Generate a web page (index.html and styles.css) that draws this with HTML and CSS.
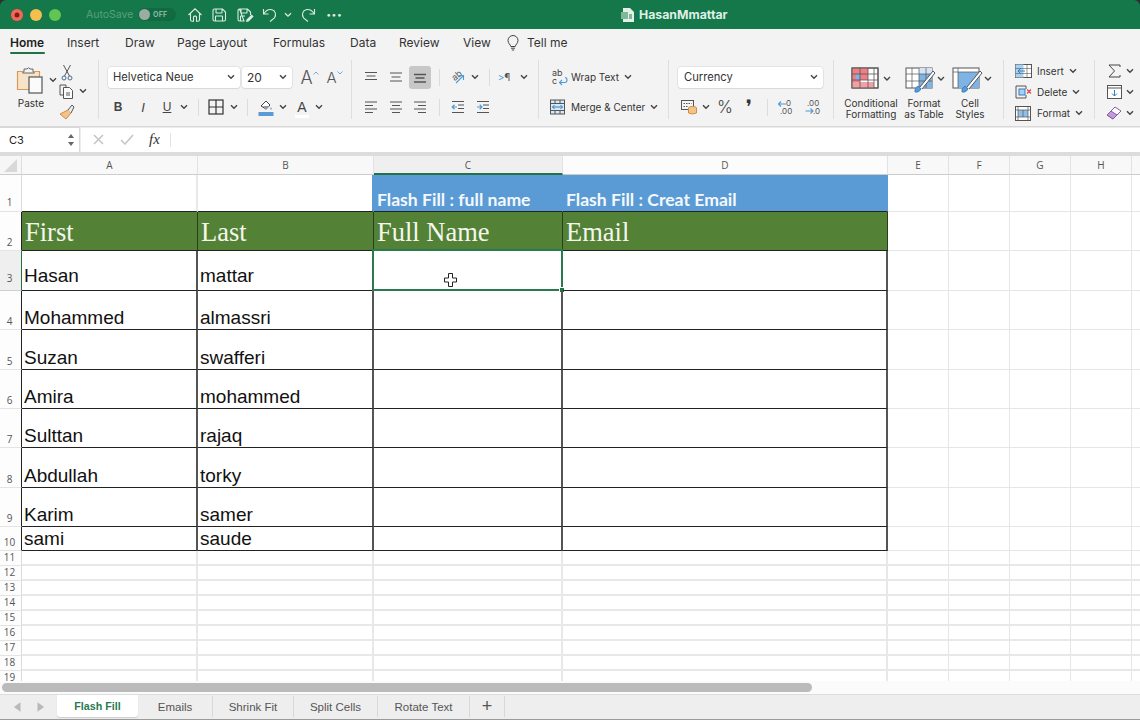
FILE: index.html
```html
<!DOCTYPE html>
<html lang="en">
<head>
<meta charset="utf-8">
<title>HasanMmattar</title>
<link rel="stylesheet" href="styles.css">
</head>
<body>
<svg class="defs" width="0" height="0"><symbol id="chev" viewBox="0 0 8 6"><path d="M1 1.200l3 3 3-3" fill="none" stroke="#444" stroke-width="1.400"/></symbol><symbol id="caret-up" viewBox="0 0 6 4"><path d="M.5 3.500L3 1l2.500 2.500" fill="none" stroke="#7fa9cc" stroke-width="1"/></symbol><symbol id="caret-dn" viewBox="0 0 6 4"><path d="M.5 .5L3 3 5.500 .5" fill="none" stroke="#7fa9cc" stroke-width="1"/></symbol></svg>
<div class="app">
<header class="titlebar">
  <span class="light red"></span><span class="light yellow"></span><span class="light green"></span>
  <span class="autosave">AutoSave</span>
  <span class="toggle"><span class="knob"></span><span class="off">OFF</span></span>
  <span class="i w7"></span>
  <span class="i w24"><svg width="16" height="16" viewBox="0 0 16 16" class="tb"><path d="M1.500 8L8 1.800 14.500 8M3.500 6.500v6.200q0 1.600 1.600 1.600h1.400v-4.200q0-1 1-1h1q1 0 1 1v4.200h1.400q1.600 0 1.600-1.600V6.500"/></svg></span>
  <span class="i w24"><svg width="16" height="16" viewBox="0 0 16 16" class="tb"><path d="M3.500 2h8l3 3v7.500q0 1.500-1.500 1.500H3.500Q2 14 2 12.500v-9Q2 2 3.500 2zM5 2v3.500q0 .5.500.5h5q.5 0 .5-.5V2M4.500 14V9.500q0-.5.500-.5h6q.5 0 .5.500V14"/></svg></span>
  <span class="i w28"><svg width="18" height="16" viewBox="0 0 18 16" class="tb"><path d="M3.500 2h8l3 3v3M8 14H3.500Q2 14 2 12.500v-9Q2 2 3.500 2zM5 2v3.500q0 .5.500.5h5q.5 0 .5-.5V2M4.500 14V9.500q0-.5.500-.5h4"/><path d="M10 15l.6-2.600 5-5 2 2-5 5z" fill="#dcebe3" stroke="none"/></svg></span>
  <span class="i w22"><svg width="16" height="16" viewBox="0 0 16 16" class="tb"><path d="M1.500 2v5h5M1.800 6.800C4 3.500 7 2 10 2.800c3.500 1 4.500 5 2.500 8L8 14.500"/></svg></span>
  <span class="i w14"><svg width="8" height="6" class="wchev"><path d="M1 1.200l3 3 3-3"/></svg></span>
  <span class="i w26"><svg width="16" height="16" viewBox="0 0 16 16" class="tb"><path d="M14.500 2v5h-5M14.200 6.800C12 3.500 9 2 6 2.800c-3.500 1-4.500 5-2.500 8L8 14.500"/></svg></span>
  <span class="i w26 dots">···</span>
  <span class="doc"><svg width="14" height="16" viewBox="0 0 14 16"><path d="M2 1h7l4 4v10H2z" fill="#e4efe9"/><rect x="0" y="5" width="7" height="7" fill="#7fb79b"/><rect x="8" y="7" width="3" height="5" fill="#7fb79b"/></svg></span>
  <span class="doctitle">HasanMmattar</span>
</header>

<nav class="tabs">
  <span class="tab active">Home</span><span class="tab t-insert">Insert</span><span class="tab t-draw">Draw</span><span class="tab t-page">Page Layout</span><span class="tab t-form">Formulas</span><span class="tab t-data">Data</span><span class="tab t-rev">Review</span><span class="tab t-view">View</span>
  <svg class="bulb" width="12" height="16" viewBox="0 0 12 16"><path d="M3.800 11.500C3.500 9.500 1 8.500 1 5.500a5 5 0 0 1 10 0c0 3-2.500 4-2.800 6zM4 13.200h4M4.800 15h2.400" fill="none" stroke="#444" stroke-width="1"/></svg>
  <span class="tab t-tell">Tell me</span>
</nav>

<section class="ribbon">
  <div class="grp g1">
    <div class="paste">
      <div class="pasteicon">
        <svg width="30" height="28" viewBox="0 0 30 28"><path d="M1.500 5.500h22v18H1.500z" fill="#f7e3c8" stroke="#d99a55" stroke-width="1.200"/><path d="M8 5.500V3h3q1.500-2.500 3-0h3v2.500l1.500 1.500H6.500z" fill="#f4f4f4" stroke="#666" stroke-width="1"/><rect x="13" y="11" width="13" height="16" fill="#fbfbfb" stroke="#555" stroke-width="1.200"/></svg>
        <svg class="chev c-p" width="8" height="6"><use href="#chev"/></svg>
      </div>
      <span class="lbl">Paste</span>
    </div>
    <div class="clip">
      <div class="cliprow r-cut"><svg width="12" height="17" viewBox="0 0 12 17" fill="none" stroke="#4a6f8f" stroke-width="1"><path d="M2.500 1l6 11M9.500 1l-6 11" stroke="#555"/><circle cx="3" cy="14" r="2"/><circle cx="9" cy="14" r="2"/></svg></div>
      <div class="cliprow r-copy"><svg width="16" height="15" viewBox="0 0 16 15" fill="none" stroke="#555" stroke-width="1"><path d="M1 1h6v2M1 1v10h3"/><path d="M4.500 3.500h6l3 3v8h-9z" fill="#fbfbfb"/><rect x="7" y="8" width="4" height="4" fill="#aaa" stroke="none"/></svg><svg class="chev c-c" width="8" height="6"><use href="#chev"/></svg></div>
      <div class="cliprow r-paint"><svg width="16" height="16" viewBox="0 0 16 16"><path d="M9 6l3 3-5 6-6-5z" fill="#f2c48d" stroke="#d48b3f"/><path d="M9 6l4-5 2 2-3 6" fill="#eee" stroke="#555"/></svg></div>
    </div>
  </div>

  <div class="grp g2 stack">
    <div class="row">
      <span class="sel s-font">Helvetica Neue<svg width="8" height="6"><use href="#chev"/></svg></span>
      <span class="sel s-size">20<svg width="8" height="6"><use href="#chev"/></svg></span>
      <span class="i w6"></span>
      <span class="i w18 bigA">A<svg class="car" width="6" height="4"><use href="#caret-up"/></svg></span>
      <span class="i w7"></span>
      <span class="i w18 medA">A<svg class="car" width="6" height="4"><use href="#caret-dn"/></svg></span>
    </div>
    <div class="row">
      <span class="i w20 fmt b">B</span><span class="i w30 fmt it">I</span><span class="i w18 fmt un">U</span>
      <span class="i w16"><svg width="8" height="6"><use href="#chev"/></svg></span>
      <span class="i w12"><span class="vsep"></span></span>
      <span class="i w24"><svg width="16" height="16" viewBox="0 0 16 16" fill="none" stroke="#333" stroke-width="1.200"><rect x="1" y="1" width="14" height="14"/><path d="M8 1v14M1 8h14"/></svg></span>
      <span class="i w12"><svg width="8" height="6"><use href="#chev"/></svg></span>
      <span class="i w14"><span class="vsep"></span></span>
      <span class="i w24"><svg width="16" height="18" viewBox="0 0 16 18"><path d="M3 8l5-5 4 4-4 4z" fill="#fff" stroke="#444"/><path d="M5 8h7l-4 4z" fill="#999"/><path d="M13 9q1.500 2 0 3-1.500-1 0-3z" fill="#5b9bd5"/><rect x="0.500" y="14" width="15" height="4" fill="#5b9bd5"/></svg></span>
      <span class="i w10"><svg width="8" height="6"><use href="#chev"/></svg></span>
      <span class="i w28 colA">A</span>
      <span class="i w6"><svg width="8" height="6"><use href="#chev"/></svg></span>
    </div>
  </div>

  <div class="grp g3 stack">
    <div class="row">
      <span class="i w22"><svg width="14" height="14" class="ln"><path d="M1 2.500h12M2.500 6h9M1 9.500h12"/></svg></span>
      <span class="i w27"><svg width="14" height="14" class="ln"><path d="M1 3h12M2.500 7h9M1 11h12"/></svg></span>
      <span class="i w22 on"><svg width="14" height="14" class="ln"><path d="M1 4.500h12M2.500 8h9M1 12h12" stroke-width="1.500"/></svg></span>
      <span class="i w16"><span class="vsep"></span></span>
      <span class="i w22"><svg width="18" height="16" viewBox="0 0 18 16"><text x="3" y="11" class="rot" transform="rotate(-40 6 8)">ab</text><path d="M7 14l7-7M10 6.500h4.500V11" fill="none" stroke="#4d9bd8" stroke-width="1.100"/></svg></span>
      <span class="i w12"><svg width="8" height="6"><use href="#chev"/></svg></span>
      <span class="i w16"><span class="vsep"></span></span>
      <span class="i w14 rtl"><em>&gt;</em>¶</span>
      <span class="i w26"><svg width="8" height="6"><use href="#chev"/></svg></span>
    </div>
    <div class="row">
      <span class="i w22"><svg width="14" height="14" class="ln"><path d="M1 2h12M1 5.500h8M1 9h12M1 12.500h8"/></svg></span>
      <span class="i w27"><svg width="14" height="14" class="ln"><path d="M1 2h12M3 5.500h8M1 9h12M3 12.500h8"/></svg></span>
      <span class="i w22"><svg width="14" height="14" class="ln"><path d="M1 2h12M5 5.500h8M1 9h12M5 12.500h8"/></svg></span>
      <span class="i w16"><span class="vsep"></span></span>
      <span class="i w22"><svg width="14" height="14" class="ln"><path d="M1 1.500h12M7 5h6M7 8.500h6M1 12.500h12"/><path d="M6 7H1M3.500 4.800L1.200 7l2.300 2.200" stroke="#4d9bd8"/></svg></span>
      <span class="i w28"><svg width="14" height="14" class="ln"><path d="M1 1.500h12M7 5h6M7 8.500h6M1 12.500h12"/><path d="M1 7h5M3.700 4.800L6 7 3.700 9.200" stroke="#4d9bd8"/></svg></span>
    </div>
  </div>

  <div class="grp g4 stack">
    <div class="row">
      <span class="ic22"><svg width="20" height="18" viewBox="0 0 20 18"><text x="3" y="8" class="wt">ab</text><text x="3" y="16" class="wt">c</text><path d="M16 9.500q2 0 2 2.500t-2 2.500h-5M13 12l-2.500 2.500L13 17" fill="none" stroke="#4d9bd8" stroke-width="1.100"/></svg></span>
      <span class="lbl">Wrap Text</span><svg class="mchev" width="8" height="6"><use href="#chev"/></svg>
    </div>
    <div class="row">
      <span class="ic22"><svg width="17" height="16" viewBox="0 0 17 16"><rect x="1.500" y="1" width="14" height="14" fill="#d7e8f6" stroke="#555"/><path d="M1.500 4.500h14M1.500 11.500h14M6 1v3.500M11 1v3.500M6 11.500V15M11 11.500V15" stroke="#555" fill="none"/><path d="M3.500 8h10M5.500 6L3.500 8l2 2M11.500 6l2 2-2 2" stroke="#2f7fbf" fill="none"/></svg></span>
      <span class="lbl">Merge &amp; Center</span><svg class="mchev" width="8" height="6"><use href="#chev"/></svg>
    </div>
  </div>

  <div class="grp g5 stack">
    <div class="row"><span class="sel s-num">Currency<svg width="8" height="6"><use href="#chev"/></svg></span></div>
    <div class="row">
      <span class="i w22"><svg width="16" height="16" viewBox="0 0 16 16"><rect x="0.500" y="1.500" width="12" height="9" fill="#f6f6f6" stroke="#555"/><path d="M2.500 4.500h8M2.500 7.500h5" stroke="#555" stroke-dasharray="1.500 1"/><ellipse cx="11.500" cy="9" rx="4" ry="1.600" fill="#f2c48d" stroke="#d48b3f"/><path d="M7.500 9v5q4 2 8 0V9" fill="#f2c48d" stroke="#d48b3f"/></svg></span>
      <span class="i w12"><svg width="8" height="6"><use href="#chev"/></svg></span>
      <span class="i w26 pct">%</span>
      <span class="i w22 comma">❜</span>
      <span class="i w14"><span class="vsep"></span></span>
      <span class="i w24"><svg width="18" height="16" viewBox="0 0 18 16"><text x="9" y="7" class="dec">0</text><text x="3" y="15" class="dec">.00</text><path d="M9 5H1.500M4 2.500L1.500 5 4 7.500" fill="none" stroke="#4d9bd8" stroke-width="1.100"/></svg></span>
      <span class="i w30"><svg width="18" height="16" viewBox="0 0 18 16"><text x="3" y="7" class="dec">.00</text><text x="9" y="15" class="dec">.0</text><path d="M1.500 12H9M6.500 9.500L9 12l-2.500 2.500" fill="none" stroke="#4d9bd8" stroke-width="1.100"/></svg></span>
    </div>
  </div>

  <div class="grp g6">
    <div class="sty c-cond">
      <svg width="60" height="32" viewBox="0 0 60 32"><rect x="11" y="2" width="26" height="20" fill="#fff" stroke="#555"/><path d="M11 2h16v6H11z" fill="#ef7f86"/><path d="M19 8h8v6h-8z" fill="#ef7f86"/><path d="M11 8h8v6h-8z" fill="#ef7f86"/><path d="M11 14h8v2H11z" fill="#ef7f86"/><path d="M19 8h-4v6h4z" fill="#7fb2e5"/><path d="M11 16h22v6H11z" fill="#f3a0a5"/><path d="M11 8h26M11 14h26M19 2v20M27 2v20M33 2v20" stroke="#555" fill="none" stroke-width=".8"/><rect x="11" y="2" width="26" height="20" fill="none" stroke="#555"/><path d="M43 11l3 3 3-3" fill="none" stroke="#444" stroke-width="1.400"/></svg>
      <span class="lbl">Conditional<br>Formatting</span>
    </div>
    <div class="sty c-fmt">
      <svg width="44" height="32" viewBox="0 0 44 32"><rect x="4" y="2" width="26" height="20" fill="#fff" stroke="#555"/><path d="M17 8h13v14H17z" fill="#7fb2e5"/><path d="M17 2h13v6H17z" fill="#d4e5f6"/><path d="M4 8h26M4 15h26M17 2v20M24 2v20M10 2v20" stroke="#555" fill="none" stroke-width=".7"/><path d="M13 26q-1-4 3-6l3 3q-2 4-6 3z" fill="#5b9bd5" stroke="#3f82bd"/><path d="M18 21L31 5l2 2-13 16" fill="#fff" stroke="#555"/><path d="M36 11l3 3 3-3" fill="none" stroke="#444" stroke-width="1.400"/></svg>
      <span class="lbl">Format<br>as Table</span>
    </div>
    <div class="sty c-cell">
      <svg width="44" height="32" viewBox="0 0 44 32"><rect x="5" y="2" width="26" height="20" fill="#fff" stroke="#555"/><path d="M10 6h21v16H10z" fill="#7fb2e5"/><path d="M5 6h26M10 2v20" stroke="#555" fill="none" stroke-width=".7"/><path d="M14 26q-1-4 3-6l3 3q-2 4-6 3z" fill="#5b9bd5" stroke="#3f82bd"/><path d="M19 21L32 5l2 2-13 16" fill="#fff" stroke="#555"/><path d="M37 11l3 3 3-3" fill="none" stroke="#444" stroke-width="1.400"/></svg>
      <span class="lbl">Cell<br>Styles</span>
    </div>
  </div>

  <div class="grp g7 three">
    <div class="row3"><span class="ic22"><svg width="17" height="14" viewBox="0 0 17 14"><rect x=".5" y=".5" width="16" height="13" fill="#fff" stroke="#555"/><path d="M.5 .5h8v13h-8z" fill="#a9d0f0"/><path d="M10 7H3M5.500 4.500L3 7l2.500 2.500" stroke="#2f7fbf" fill="none"/><path d="M12 .5v13M.5 4.500h16M.5 9.500h16" stroke="#555" fill="none" stroke-width=".6"/></svg></span><span class="lbl">Insert</span><svg class="mchev" width="8" height="6"><use href="#chev"/></svg></div>
    <div class="row3"><span class="ic22"><svg width="17" height="14" viewBox="0 0 17 14"><path d="M1 1h10v3M1 13h10v-3M1 1v12" fill="none" stroke="#555"/><rect x="4" y="4" width="6" height="6" fill="#a9d0f0" stroke="#2f7fbf"/><path d="M12 4.500l4 4M16 4.500l-4 4" stroke="#d94040" fill="none" stroke-width="1.100"/></svg></span><span class="lbl">Delete</span><svg class="mchev" width="8" height="6"><use href="#chev"/></svg></div>
    <div class="row3"><span class="ic22"><svg width="16" height="15" viewBox="0 0 16 15"><rect x=".5" y=".5" width="15" height="14" fill="#fff" stroke="#555"/><rect x="3" y="4" width="10" height="7" fill="#8fc0ea"/><path d="M.5 4h15M.5 11h15M3 .5v14M13 .5v14M8 4v7" stroke="#555" fill="none" stroke-width=".7"/></svg></span><span class="lbl">Format</span><svg class="mchev" width="8" height="6"><use href="#chev"/></svg></div>
  </div>

  <div class="grp g8 three">
    <div class="row3"><span class="i w18"><svg width="13" height="14" viewBox="0 0 13 14"><path d="M12 3V1H1l5.500 6L1 13h11v-2" fill="none" stroke="#444"/></svg></span><span class="i w14"><svg width="8" height="6"><use href="#chev"/></svg></span></div>
    <div class="row3"><span class="i w18"><svg width="15" height="14" viewBox="0 0 15 14"><rect x=".5" y=".5" width="14" height="13" fill="#fff" stroke="#555"/><path d="M.5 3h14" stroke="#555"/><path d="M7.500 5v6M5 8.500l2.500 2.500L10 8.500" fill="none" stroke="#2f7fbf"/></svg></span><span class="i w14"><svg width="8" height="6"><use href="#chev"/></svg></span></div>
    <div class="row3"><span class="i w18"><svg width="16" height="14" viewBox="0 0 16 14"><path d="M1 9l8-8 6 4-8 8z" fill="#fff" stroke="#8a5aa8"/><path d="M1 9l4-4 6 4-4 4z" fill="#c39bdc" stroke="#8a5aa8"/></svg></span><span class="i w14"><svg width="8" height="6"><use href="#chev"/></svg></span></div>
  </div>
</section>

<section class="formula">
  <div class="namebox"><span>C3</span><svg width="8" height="14" viewBox="0 0 8 14"><path d="M4 1l3 4H1zM4 13L1 9h6z" fill="#666"/></svg></div>
  <div class="fbar">
    <svg class="fx1" width="11" height="11" viewBox="0 0 11 11"><path d="M1 1l9 9M10 1l-9 9" stroke="#c4c4c4" stroke-width="1.500"/></svg>
    <svg class="fx2" width="14" height="11" viewBox="0 0 14 11"><path d="M1 6l4 4 8-9" fill="none" stroke="#c4c4c4" stroke-width="1.500"/></svg>
    <span class="fxlabel">fx</span>
    <span class="fxsep"></span>
  </div>
</section>
<div class="band"></div>

<main class="sheet">
  <div class="corner"><svg width="14" height="13"><path d="M13 0v13H0z" fill="#d8d8d8"/></svg></div><div class="ch">A</div><div class="ch">B</div><div class="ch ch-on">C</div><div class="ch ch-d">D</div><div class="ch">E</div><div class="ch">F</div><div class="ch">G</div><div class="ch">H</div><div class="ch"></div>

  <div class="rh rh1">1</div><div class="c t1"></div><div class="c t1 blue-l"></div><div class="c blue">Flash Fill : full name</div><div class="c blue">Flash Fill : Creat Email</div><div class="c"></div><div class="c"></div><div class="c"></div><div class="c"></div><div class="c"></div>

  <div class="rh blk">2</div><div class="c t hd">First</div><div class="c t hd">Last</div><div class="c t hd">Full Name</div><div class="c t hd">Email</div><div class="c"></div><div class="c"></div><div class="c"></div><div class="c"></div><div class="c"></div>

  <div class="rh rh-on">3</div><div class="c t d d3">Hasan</div><div class="c t d d3">mattar</div><div class="c t cellC3"><div class="selbox"><span class="handle"></span></div><svg class="cursor" width="13" height="14" viewBox="0 0 13 14"><path d="M4.500 .5h4v4.500h4v4h-4v4.500h-4V9h-4V5h4z" fill="#fff" stroke="#222"/></svg></div><div class="c t"></div><div class="c"></div><div class="c"></div><div class="c"></div><div class="c"></div><div class="c"></div>

  <div class="rh blk">4</div><div class="c t d">Mohammed</div><div class="c t d">almassri</div><div class="c t"></div><div class="c t"></div><div class="c"></div><div class="c"></div><div class="c"></div><div class="c"></div><div class="c"></div>
  <div class="rh blk">5</div><div class="c t d">Suzan</div><div class="c t d">swafferi</div><div class="c t"></div><div class="c t"></div><div class="c"></div><div class="c"></div><div class="c"></div><div class="c"></div><div class="c"></div>
  <div class="rh blk">6</div><div class="c t d">Amira</div><div class="c t d">mohammed</div><div class="c t"></div><div class="c t"></div><div class="c"></div><div class="c"></div><div class="c"></div><div class="c"></div><div class="c"></div>
  <div class="rh blk">7</div><div class="c t d">Sulttan</div><div class="c t d">rajaq</div><div class="c t"></div><div class="c t"></div><div class="c"></div><div class="c"></div><div class="c"></div><div class="c"></div><div class="c"></div>
  <div class="rh blk">8</div><div class="c t d">Abdullah</div><div class="c t d">torky</div><div class="c t"></div><div class="c t"></div><div class="c"></div><div class="c"></div><div class="c"></div><div class="c"></div><div class="c"></div>
  <div class="rh blk">9</div><div class="c t d">Karim</div><div class="c t d">samer</div><div class="c t"></div><div class="c t"></div><div class="c"></div><div class="c"></div><div class="c"></div><div class="c"></div><div class="c"></div>
  <div class="rh blk">10</div><div class="c t d d10">sami</div><div class="c t d d10">saude</div><div class="c t"></div><div class="c t"></div><div class="c"></div><div class="c"></div><div class="c"></div><div class="c"></div><div class="c"></div>

  <div class="rh">11</div><div class="c"></div><div class="c"></div><div class="c"></div><div class="c"></div><div class="c"></div><div class="c"></div><div class="c"></div><div class="c"></div><div class="c"></div>
  <div class="rh">12</div><div class="c"></div><div class="c"></div><div class="c"></div><div class="c"></div><div class="c"></div><div class="c"></div><div class="c"></div><div class="c"></div><div class="c"></div>
  <div class="rh">13</div><div class="c"></div><div class="c"></div><div class="c"></div><div class="c"></div><div class="c"></div><div class="c"></div><div class="c"></div><div class="c"></div><div class="c"></div>
  <div class="rh">14</div><div class="c"></div><div class="c"></div><div class="c"></div><div class="c"></div><div class="c"></div><div class="c"></div><div class="c"></div><div class="c"></div><div class="c"></div>
  <div class="rh">15</div><div class="c"></div><div class="c"></div><div class="c"></div><div class="c"></div><div class="c"></div><div class="c"></div><div class="c"></div><div class="c"></div><div class="c"></div>
  <div class="rh">16</div><div class="c"></div><div class="c"></div><div class="c"></div><div class="c"></div><div class="c"></div><div class="c"></div><div class="c"></div><div class="c"></div><div class="c"></div>
  <div class="rh">17</div><div class="c"></div><div class="c"></div><div class="c"></div><div class="c"></div><div class="c"></div><div class="c"></div><div class="c"></div><div class="c"></div><div class="c"></div>
  <div class="rh">18</div><div class="c"></div><div class="c"></div><div class="c"></div><div class="c"></div><div class="c"></div><div class="c"></div><div class="c"></div><div class="c"></div><div class="c"></div>
  <div class="rh rh19">19</div><div class="c"></div><div class="c"></div><div class="c"></div><div class="c"></div><div class="c"></div><div class="c"></div><div class="c"></div><div class="c"></div><div class="c"></div>
</main>

<div class="hscroll"><span class="thumb"></span></div>

<footer class="sheets">
  <svg class="nav" width="36" height="12" viewBox="0 0 36 12"><path d="M9 1v10L2 6zM27 1v10l7-5z" fill="#b9b9b9"/></svg>
  <span class="st st-on">Flash Fill</span><span class="st st-e">Emails</span><span class="st st-s">Shrink Fit</span><span class="st st-c">Split Cells</span><span class="st st-r">Rotate Text</span><span class="st st-p">+</span>
</footer>
</div>
</body>
</html>
```
FILE: styles.css
```css
* { box-sizing: border-box; }
html, body { margin: 0; padding: 0; background: #2d2d2d; }
body { width: 1140px; height: 720px; overflow: hidden; font-family: Inter, "Liberation Sans", sans-serif; color: #333; }
.defs { position: absolute; }
.app { display: flex; flex-direction: column; height: 720px; }
svg { display: block; flex: none; }

.titlebar { height: 29px; background: #14784a; display: flex; align-items: center; padding-left: 11px; border-top-left-radius: 6px; border-top-right-radius: 6px; flex: none; }
.light { width: 12px; height: 12px; border-radius: 50%; margin-right: 7px; flex: none; }
.light.red { background: #ec6a5e; box-shadow: inset 0 0 0 3.500px #ec6a5e, inset 0 0 0 6px #8c1a12; }
.light.yellow { background: #f4bf4f; }
.light.green { background: #61c554; margin-right: 0; }
.autosave { margin-left: 25px; width: 48px; font-size: 10.500px; color: #5c9f7e; white-space: nowrap; }
.toggle { margin-left: 4px; width: 38px; height: 13px; border-radius: 7px; background: #116a41; display: flex; align-items: center; padding-left: 1px; flex: none; }
.knob { width: 11px; height: 11px; border-radius: 50%; background: #9aaca3; }
.off { font-size: 7px; font-weight: 700; color: #8db8a2; margin-left: 3px; letter-spacing: .3px; }
.tb { fill: none; stroke: #dcebe3; stroke-width: 1.100; }
.wchev { fill: none; stroke: #dcebe3; stroke-width: 1.300; }
.dots { color: #e4efe9; font-size: 16px; font-weight: 700; line-height: 1; }
.doc { margin-left: 274px; width: 18px; flex: none; }
.doctitle { font-size: 12.300px; font-weight: 700; color: #dfeee6; white-space: nowrap; }

.i { display: flex; align-items: center; justify-content: center; height: 100%; flex: none; }
.w6 { width: 6px; } .w7 { width: 7px; } .w10 { width: 10px; } .w12 { width: 12px; } .w14 { width: 14px; } .w16 { width: 16px; } .w18 { width: 18px; } .w20 { width: 20px; } .w22 { width: 22px; } .w24 { width: 24px; } .w26 { width: 26px; } .w27 { width: 27px; } .w28 { width: 28px; } .w30 { width: 30px; }

.tabs { height: 31px; background: #f3f3f3; display: flex; align-items: center; padding: 0 0 4px 10px; flex: none; }
.tab { font-size: 12px; color: #333; white-space: nowrap; position: relative; }
.tab.active { width: 35px; font-weight: 600; color: #1d1d1d; }
.tab.active::after { content: ""; position: absolute; left: 0; right: 0; top: 17px; height: 2px; background: #217346; border-radius: 1px; }
.t-insert { margin-left: 22px; width: 34px; }
.t-draw { margin-left: 24px; width: 29px; }
.t-page { margin-left: 23px; width: 71px; }
.t-form { margin-left: 25px; width: 53px; }
.t-data { margin-left: 24px; width: 27px; }
.t-rev { margin-left: 22px; width: 41px; }
.t-view { margin-left: 23px; width: 28px; }
.bulb { margin-left: 16px; }
.t-tell { margin-left: 8px; }

.ribbon { height: 67px; background: #f3f3f3; border-bottom: 1px solid #d8d8d8; display: flex; align-items: flex-start; flex: none; }
.grp { height: 59px; border-right: 1px solid #dedede; flex: none; }
.lbl { font-size: 10px; color: #333; white-space: nowrap; line-height: 11px; }
.stack { display: flex; flex-direction: column; gap: 8px; padding-top: 6px; }
.row { height: 22px; display: flex; align-items: center; flex: none; }
.three { display: flex; flex-direction: column; gap: 1px; padding-top: 1px; }
.row3 { height: 20px; display: flex; align-items: center; flex: none; }
.ic22 { width: 22px; flex: none; display: flex; align-items: center; }
.mchev { margin-left: 5px; }

.g1 { width: 99px; padding: 5px 0 0 16px; display: flex; }
.paste { width: 44px; flex: none; }
.pasteicon { height: 30px; display: flex; align-items: center; }
.c-p { margin-left: 3px; }
.paste .lbl { display: block; width: 30px; text-align: center; margin-top: 3px; }
.clip { display: flex; flex-direction: column; margin: -1px 0 0 -1px; flex: none; }
.cliprow { height: 20px; display: flex; align-items: center; flex: none; }
.r-cut { margin-left: 2px; height: 17px; }
.c-c { margin-left: 4px; }
.r-paint { margin-top: 1px; }

.g2 { width: 253px; padding-left: 9px; }
.sel { height: 21px; background: #fff; border-radius: 3px; box-shadow: 0 0 0 .5px #d6d6d6, 0 1px 1px #ddd; display: flex; align-items: center; justify-content: space-between; padding: 0 5px; font-size: 11.200px; color: #333; flex: none; }
.s-font { width: 132px; }
.s-size { width: 50px; margin-left: 2px; font-size: 12px; }
.s-num { width: 145px; padding-left: 6px; }
.bigA { font-size: 18px; color: #555; font-weight: 300; }
.medA { font-size: 15px; color: #555; font-weight: 300; }
.car { margin: -9px -5px 0 0; }
.fmt { font-size: 13px; color: #444; font-family: "Liberation Sans", sans-serif; }
.b { font-weight: 700; font-size: 12px; }
.it { font-style: italic; }
.un { text-decoration: underline; font-size: 12px; }
.colA { font-size: 14px; color: #444; font-family: "Liberation Sans", sans-serif; position: relative; }
.colA::after { content: ""; position: absolute; left: 7px; right: 7px; bottom: 0; height: 3px; background: #fff; }
.vsep { width: 1px; height: 17px; background: #dcdcdc; display: block; }

.g3 { width: 187px; padding-left: 8px; }
.ln { fill: none; stroke: #555; stroke-width: 1.200; }
.on { background: #c7c7c7; border-radius: 3px; height: 23px; }
.rot { font-size: 9px; fill: #555; font-family: Inter, sans-serif; }
.rtl { font-size: 10px; color: #555; white-space: nowrap; }
.rtl em { font-style: normal; color: #4d9bd8; }
.g4 { width: 130px; padding-left: 10px; }
.wt { font-size: 9px; fill: #444; font-family: Inter, sans-serif; }
.g5 { width: 165px; padding-left: 9px; }
.pct { font-size: 17px; color: #444; font-weight: 300; }
.comma { font-size: 20px; color: #333; font-family: "DejaVu Sans", sans-serif; line-height: 1; }
.dec { font-size: 8px; fill: #555; font-family: Inter, sans-serif; }

.g6 { width: 170px; padding: 0 0 0 7px; display: flex; gap: 1px; }
.sty { display: flex; flex-direction: column; align-items: center; padding-top: 6px; flex: none; }
.c-cond { width: 60px; }
.c-fmt { width: 44px; }
.c-cell { width: 44px; margin-left: 1px; }
.sty .lbl { text-align: center; }
.g7 { width: 91px; padding-left: 11px; }
.g8 { width: 45px; padding-left: 10px; border-right: 0; }

.formula { height: 25px; background: #ececec; display: flex; align-items: center; flex: none; }
.namebox { width: 79px; height: 24px; background: #fff; display: flex; align-items: center; justify-content: space-between; padding: 0 4px 0 9px; font-size: 11px; color: #222; box-shadow: 0 0 0 1px #d9d9d9; }
.fbar { flex: 1; height: 24px; margin-left: 2px; background: #fff; display: flex; align-items: center; padding-left: 12px; }
.fx2 { margin-left: 16px; }
.fxlabel { margin-left: 15px; font-family: "Liberation Serif", serif; font-style: italic; font-size: 15px; color: #333; width: 14px; }
.fxsep { margin-left: 7px; width: 1px; height: 14px; background: #e3e3e3; }
.band { height: 4px; background: #dcdcdc; flex: none; }

.sheet { height: 525px; flex: none; overflow: hidden; background: #fff; display: grid; grid-template-columns: 22px 176px 176px 189px 325px 61px 61px 61px 61px 9px; grid-template-rows: 19px 37px 39px 40px 39px 40px 39px 39px 40px 39px 24px repeat(9, 15px); }
.corner { background: #f6f6f6; border-right: 1px solid #ddd; border-bottom: 1px solid #ccc; display: flex; justify-content: flex-end; align-items: flex-end; padding: 0 3px 2px 0; }
.ch { background: #f8f8f8; border-right: 1px solid #e2e2e2; border-bottom: 1px solid #ccc; font: 10px "Open Sans", sans-serif; color: #555; display: flex; align-items: center; justify-content: center; }
.ch-on { background: #efefef; border-bottom: 2px solid #217346; }
.ch-d { background: #fcfcfc; }
.rh { background: #fdfdfd; border-right: 1px solid #dcdcdc; border-bottom: 1px solid #e4e4e4; font: 10px "Open Sans", sans-serif; color: #555; display: flex; align-items: flex-end; justify-content: center; padding: 0 2px 2px 0; line-height: 11px; }
.rh1 { padding-bottom: 3px; }
.rh.blk { border-right-color: #222; }
.rh-on { background: #efefef; border-right: 1px solid #217346; border-bottom-color: #d0d0d0; padding-bottom: 6px; }
.rh19 { overflow: hidden; }
.c { border-right: 1px solid #e6e6e6; border-bottom: 1px solid #e6e6e6; position: relative; min-width: 0; white-space: nowrap; }
.c:nth-child(n+111) { border-bottom: 2px solid #e8e8e8; }
.c:nth-child(n+111):nth-child(10n+2), .c:nth-child(n+111):nth-child(10n+3), .c:nth-child(n+111):nth-child(10n+4), .c:nth-child(n+111):nth-child(10n+5), .t1 { border-right-width: 2px; border-right-color: #e8e8e8; }
.t { border-right: 2px solid #555; border-bottom-color: #222; }
.t1 { border-bottom-color: #222; }
.t1.blue-l { border-right-color: #5b9bd5; }
.blue { background: #5b9bd5; border-right-color: #5b9bd5; border-bottom-color: #222; color: #f4f8fc; font: 700 17.600px Lato, "Open Sans", sans-serif; display: flex; align-items: flex-end; padding: 0 0 1px 3px; }
.hd { background: #538135; color: #f4f6ee; font: 26.500px "Liberation Serif", serif; display: flex; align-items: center; padding: 2px 0 0 3px; border-right-width: 1px; border-right-color: #2c3f1c; }
.d { font: 19px "Liberation Sans", Arial, sans-serif; color: #111; display: flex; align-items: flex-end; padding: 0 0 0 2px; }
.d3 { padding-bottom: 3px; }
.d10 { align-items: center; }
.selbox { position: absolute; left: -2px; right: -2px; top: -2px; bottom: -1px; border: 2px solid #2a7a50; pointer-events: none; }
.handle { position: absolute; right: -4px; bottom: -4px; width: 6px; height: 6px; background: #217346; border: 1px solid #fff; }
.cursor { position: absolute; left: 70px; top: 22px; }

.hscroll { height: 14px; background: #fbfbfb; padding: 2px 0 0 2px; border-bottom: 1px solid #ddd; flex: none; }
.thumb { display: block; width: 810px; height: 9px; background: #bbb; border-radius: 5px; }
.sheets { flex: 1; background: #eeeeee; border-bottom: 1px solid #9a9a9a; display: flex; align-items: flex-start; padding-left: 12px; }
.nav { margin-top: 6px; width: 34px; flex: none; }
.st { height: 21px; font: 11.500px "Liberation Sans", Arial, sans-serif; color: #555; display: flex; align-items: center; justify-content: center; border-right: 1px solid #d8d8d8; margin-top: 1px; flex: none; }
.st-on { margin-left: 11px; margin-top: 0; width: 81px; height: 22px; background: #fff; color: #2a7a50; font-weight: 700; font-size: 10.700px; border-radius: 0 0 3px 3px; border-right: 0; box-shadow: 0 1px 1px #ccc; }
.st-e { width: 75px; }
.st-s { width: 81px; }
.st-c { width: 84px; }
.st-r { width: 92px; }
.st-p { width: 35px; font-size: 18px; }
```
